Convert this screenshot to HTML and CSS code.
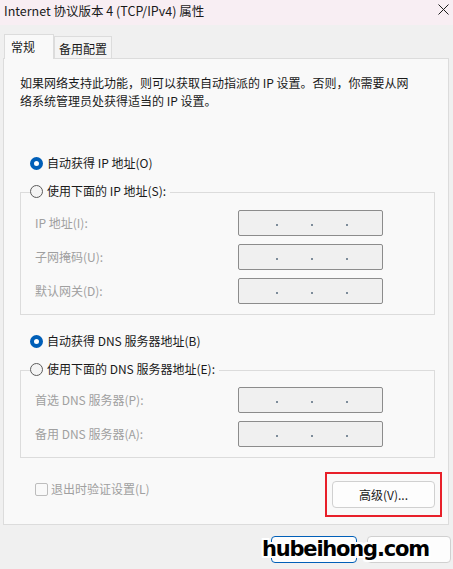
FILE: index.html
```html
<!DOCTYPE html>
<html>
  <head>
    <meta charset="utf-8">
    <link rel="stylesheet" href="styles.css">
  </head>
  <body>
    <div class="titlebar">
      <span class="title">Internet 协议版本 4 (TCP/IPv4) 属性</span>
      <svg class="close" width="11" height="11" viewBox="0 0 11 11">
        <path d="M0.5 0.5 L10.5 10.5 M10.5 0.5 L0.5 10.5" stroke="#1c1c1c" stroke-width="1"/>
      </svg>
    </div>

    <div class="tabs">
      <div class="tab active">常规</div>
      <div class="tab">备用配置</div>
    </div>

    <div class="panel">
      <p class="desc">如果网络支持此功能，则可以获取自动指派的 IP 设置。否则，你需要从网<br>络系统管理员处获得适当的 IP 设置。</p>

      <label class="radio-row first">
        <span class="radio checked"></span>自动获得 IP 地址(O)
      </label>
      <div class="group">
        <label class="radio-row legend">
          <span class="radio"></span>使用下面的 IP 地址(S):
        </label>
        <div class="rows">
          <div class="field"><span class="label">IP 地址(I):</span><span class="ip"><i></i><i></i><i></i></span></div>
          <div class="field"><span class="label">子网掩码(U):</span><span class="ip"><i></i><i></i><i></i></span></div>
          <div class="field"><span class="label">默认网关(D):</span><span class="ip"><i></i><i></i><i></i></span></div>
        </div>
      </div>

      <label class="radio-row dns">
        <span class="radio checked"></span>自动获得 DNS 服务器地址(B)
      </label>
      <div class="group">
        <label class="radio-row legend">
          <span class="radio"></span>使用下面的 DNS 服务器地址(E):
        </label>
        <div class="rows tight">
          <div class="field"><span class="label">首选 DNS 服务器(P):</span><span class="ip"><i></i><i></i><i></i></span></div>
          <div class="field"><span class="label">备用 DNS 服务器(A):</span><span class="ip"><i></i><i></i><i></i></span></div>
        </div>
      </div>

      <div class="bottom">
        <label class="check"><span class="box"></span>退出时验证设置(L)</label>
        <span class="highlight"><button class="btn advanced">高级(V)...</button></span>
      </div>
    </div>

    <div class="footer">
      <button class="btn ok"></button>
      <button class="btn cancel"></button>
      <span class="watermark">hubeihong.com</span>
    </div>
  </body>
</html>
```

FILE: styles.css
```css
body {
    margin: 0;
    background: #f0f0f0;
    font-family: "Noto Sans CJK SC", "Noto Sans", sans-serif;
    font-size: 12px;
    line-height: 18px;
    color: #1a1a1a;
    width: 453px;
    height: 569px;
    overflow: hidden;
}

.titlebar {
    height: 25px;
    background: #f8eef3;
    display: flex;
    align-items: center;
    justify-content: space-between;
    padding: 0 4px 3px 4px;
    box-sizing: border-box;
}

.title {
    font-size: 12.5px;
}

.close {
    margin-top: -4px;
}

.tabs {
    display: flex;
    align-items: flex-end;
    margin: 9px 0 0 4px;
    height: 24px;
    position: relative;
    z-index: 1;
}

.tab {
    border: 1px solid #dcdcdc;
    border-bottom: none;
    background: #f4f4f4;
    height: 22px;
    line-height: 24px;
    padding: 0 4px;
    box-sizing: border-box;
}

.tab.active {
    background: #f9f9f9;
    height: 25px;
    width: 50px;
    padding-left: 6px;
    line-height: 23px;
    margin-bottom: -1px;
}

.panel {
    margin: 0 4px 0 3px;
    border: 1px solid #dcdcdc;
    background: #f9f9f9;
    padding: 0 6px 10px 16px;
    height: 467px;
    box-sizing: border-box;
}

.desc {
    margin: 15px 0 0 0;
    line-height: 18px;
}

.radio-row {
    display: flex;
    align-items: center;
    height: 18px;
    margin-left: 10px;
}

.radio-row.first {
    margin-top: 44px;
}

.radio-row.dns {
    margin-top: 17px;
}

.radio {
    width: 13px;
    height: 13px;
    border-radius: 50%;
    border: 1px solid #5c5c5c;
    background: #f4f4f4;
    box-sizing: border-box;
    margin-right: 4px;
    flex: none;
}

.radio.checked {
    border: 4px solid #005fb8;
    background: #fff;
}

.group {
    border: 1px solid #dcdcdc;
    margin: 20px 7px 0 0;
    padding: 0 0 10px 14px;
}

.radio-row.legend {
    margin: -11px 0 0 -5px;
    background: #f9f9f9;
    width: fit-content;
    padding-right: 4px;
}

.rows {
    display: flex;
    flex-direction: column;
    gap: 8px;
    margin-top: 10px;
}

.rows.tight {
    margin-top: 9px;
}

.field {
    display: flex;
    align-items: center;
    height: 26px;
}

.label {
    width: 203px;
    color: #a0a0a0;
}

.ip {
    width: 145px;
    height: 26px;
    box-sizing: border-box;
    border: 1px solid #8c8c8c;
    border-radius: 2px;
    background: #f0f0f0;
    display: flex;
    align-items: center;
    gap: 33px;
    padding: 3px 0 0 37px;
}

.ip i {
    width: 2px;
    height: 2px;
    background: #7d8c9a;
}

.bottom {
    display: flex;
    justify-content: space-between;
    align-items: flex-start;
    margin-top: 14px;
}

.check {
    display: flex;
    align-items: center;
    color: #a0a0a0;
    margin: 8px 0 0 15px;
}

.box {
    width: 13px;
    height: 13px;
    border: 1px solid #bdbdbd;
    border-radius: 2px;
    box-sizing: border-box;
    margin-right: 3px;
}

.highlight {
    border: 2px solid #e8202a;
    padding: 7px 5px;
    display: flex;
}

.btn {
    font-family: inherit;
    font-size: 12px;
    background: #fdfdfd;
    border: 1px solid #d0d0d0;
    border-radius: 4px;
    height: 27px;
    padding: 0;
    color: #1a1a1a;
}

.advanced {
    width: 103px;
}

.footer {
    display: flex;
    justify-content: flex-end;
    gap: 10px;
    margin: 11px 2px 0 0;
    position: relative;
}

.ok {
    width: 86px;
    border-color: #005fb8;
}

.cancel {
    width: 84px;
}

.watermark {
    position: absolute;
    left: 262px;
    top: -1px;
    font-family: "DejaVu Sans", sans-serif;
    font-weight: bold;
    font-size: 21px;
    letter-spacing: -1.2px;
    line-height: 28px;
    color: #000;
    text-shadow: 2px 0 #fff, -2px 0 #fff, 0 2px #fff, 0 -2px #fff,
        2px 2px #fff, -2px -2px #fff, 2px -2px #fff, -2px 2px #fff;
}
```
